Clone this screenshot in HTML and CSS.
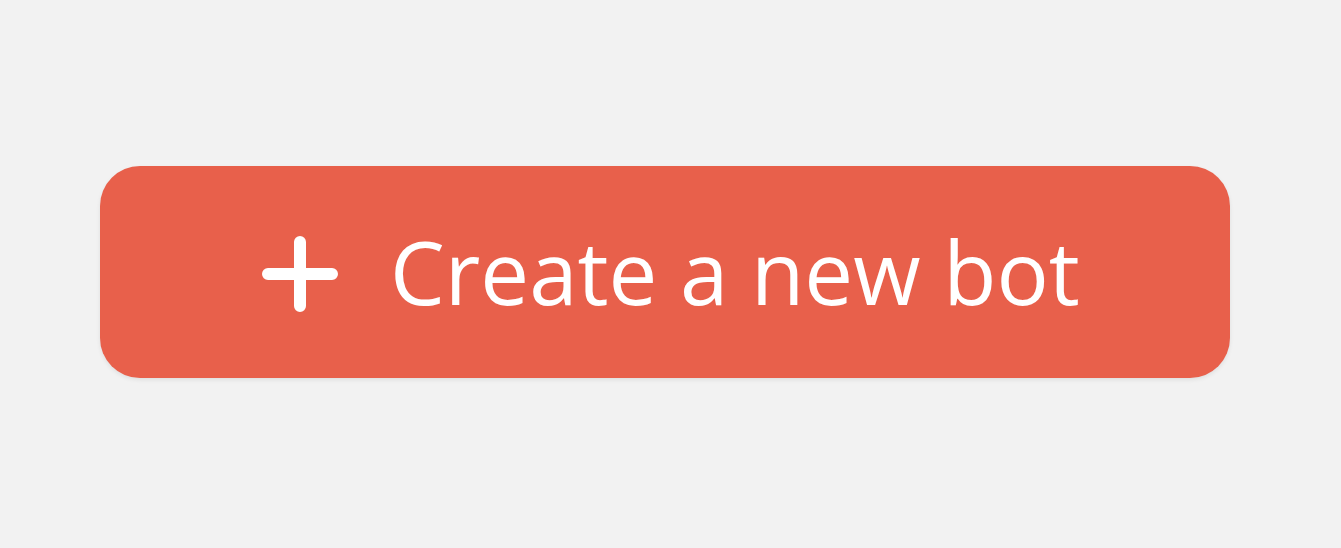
FILE: index.html
```html
<!DOCTYPE html>
<html>
<head>
<meta charset="utf-8">
<link rel="stylesheet" href="styles.css">
</head>
<body>
<main class="page">
  <button class="create-btn">
    <svg class="plus" viewBox="0 0 76 76" width="76" height="76" aria-hidden="true">
      <path d="M38 6 V70 M6 38 H70" stroke="#fff" stroke-width="12" stroke-linecap="round" fill="none"/>
    </svg>
    <span class="label">Create a new bot</span>
  </button>
</main>
</body>
</html>
```

FILE: styles.css
```css
html, body {
  margin: 0;
  padding: 0;
  background: #f2f2f2;
}
.page {
  width: 1341px;
  height: 548px;
  box-sizing: border-box;
  padding: 166px 0 0 100px;
}
.create-btn {
  width: 1130px;
  height: 212px;
  border: none;
  border-radius: 40px;
  background: #e8604b;
  box-shadow: 0 2px 4px rgba(0,0,0,0.08);
  display: flex;
  align-items: center;
  padding: 0 0 0 162px;
  gap: 52px;
  color: #fff;
  font-family: "Open Sans", sans-serif;
  cursor: pointer;
}
.plus {
  display: block;
  flex: none;
  margin-top: 4px;
}
.label {
  font-size: 87px;
  line-height: 1;
  font-weight: 400;
  margin-top: -2px;
}
```
